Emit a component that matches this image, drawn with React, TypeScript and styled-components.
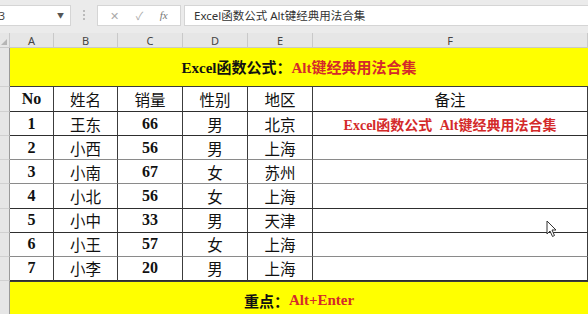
import styled, { createGlobalStyle } from 'styled-components'
import { FC } from 'react'

const serif = `"Liberation Serif", "Noto Sans CJK SC", serif`
const ui = `"Noto Sans", "Noto Sans CJK SC", sans-serif`
const red = '#d42a2a'
const line = '#3c3c3c'

const GlobalStyle = createGlobalStyle`
  html, body {
    margin: 0;
    padding: 0;
    background: #e9e9e9;
    overflow: hidden;
  }
`

const Page = styled.div`
  width: 588px;
  height: 314px;
  overflow: hidden;
  position: relative;
`

const Toolbar = styled.div`
  display: flex;
  align-items: center;
  height: 30px;
  padding-bottom: 3px;
  gap: 3px;
  background: #ebebeb;
`

const Box = styled.div`
  height: 21px;
  background: #fff;
  border: 1px solid #d5d5d5;
  box-sizing: border-box;
  display: flex;
  align-items: center;
  font-family: ${ui};
  font-size: 11px;
  color: #444;
`

const NameBox = styled(Box)`
  width: 84px;
  margin-left: -13px;
  padding: 0 0 0 6px;
  justify-content: space-between;
  border-left: none;
`

const Caret = styled.span`
  font-size: 7px;
  color: #555;
  margin-right: 6px;
`

const Dots = styled.div`
  width: 20px;
  display: flex;
  flex-direction: column;
  align-items: center;
  gap: 2px;

  span {
    width: 2px;
    height: 2px;
    background: #bbb;
  }
`

const Buttons = styled(Box)`
  width: 84px;
  justify-content: space-around;
  padding: 0 4px;
  color: #aaa;
`

const FxText = styled.span`
  font-family: ${serif};
  font-style: italic;
  font-size: 11px;
  color: #777;
`

const Formula = styled(Box)`
  flex: 1;
  padding-left: 9px;
  border-right: none;
  font-size: 11.5px;
  color: #333;
`

const Sheet = styled.div`
  display: grid;
  grid-template-columns: 10px 44px 64px 65px 65px 65px 1fr;
  grid-template-rows: 15px 39px 25px repeat(7, 24.15px) 40px;
`

const ColHead = styled.div`
  background: #e6e6e6;
  border-right: 1px solid #c9c9c9;
  border-bottom: 1px solid #c9c9c9;
  display: flex;
  align-items: center;
  justify-content: center;
  font-family: ${ui};
  font-size: 11px;
  color: #444;
  box-sizing: border-box;
`

const Corner = styled(ColHead)`
  position: relative;
  &::after {
    content: '';
    position: absolute;
    right: 2px;
    bottom: 2px;
    border-left: 6px solid transparent;
    border-bottom: 6px solid #b5b5b5;
  }
`

const RowHead = styled.div`
  background: #e6e6e6;
  border-right: 1px solid #9a9a9a;
  border-bottom: 1px solid #d0d0d0;
  box-sizing: border-box;
  overflow: hidden;
  display: flex;
  align-items: center;
  font-family: ${ui};
  font-size: 10px;
  color: #666;

  span {
    flex: none;
    width: 28px;
    margin-left: -20px;
    text-align: center;
  }
`

const Banner = styled.div<{ $top?: boolean }>`
  grid-column: 2 / 8;
  background: #ffff00;
  display: flex;
  align-items: center;
  justify-content: center;
  font-family: ${serif};
  font-weight: bold;
  font-size: 15px;
  color: #111;
  box-sizing: border-box;
  border-bottom: ${({ $top }) => ($top ? `1px solid ${line}` : 'none')};
  border-top: ${({ $top }) => ($top ? 'none' : `1px solid ${line}`)};
  padding-bottom: ${({ $top }) => ($top ? '2px' : '1px')};
`

const Red = styled.span`
  color: ${red};
`

const Cell = styled.div<{ $dark?: boolean; $bold?: boolean }>`
  background: #fff;
  border-right: 1px solid ${line};
  border-bottom: 1px solid ${({ $dark }) => ($dark ? '#2e2e2e' : '#8a8a8a')};
  box-sizing: border-box;
  display: flex;
  align-items: center;
  justify-content: center;
  font-family: ${serif};
  font-size: ${({ $bold }) => ($bold ? '16px' : '15.5px')};
  font-weight: ${({ $bold }) => ($bold ? 'bold' : 400)};
  color: #111;
  white-space: nowrap;

  &:last-child {
    border-right: none;
  }
`

const Note = styled.span`
  color: ${red};
  font-weight: bold;
  font-size: 14px;
  word-spacing: 4px;
`

const Cursor = styled.svg`
  position: absolute;
  left: 546px;
  top: 220px;
`

const rows = [
  ['1', '王东', '66', '男', '北京'],
  ['2', '小西', '56', '男', '上海'],
  ['3', '小南', '67', '女', '苏州'],
  ['4', '小北', '56', '女', '上海'],
  ['5', '小中', '33', '男', '天津'],
  ['6', '小王', '57', '女', '上海'],
  ['7', '小李', '20', '男', '上海'],
]
const darkLines = [true, false, false, true, true, false, true]

export default function App() {
  return (
    <Page>
      <GlobalStyle />
      <Toolbar>
        <NameBox>
          F3 <Caret>▼</Caret>
        </NameBox>
        <Dots>
          <span />
          <span />
          <span />
        </Dots>
        <Buttons>
          <span>✕</span>
          <span>✓</span>
          <FxText>fx</FxText>
        </Buttons>
        <Formula>Excel函数公式 Alt键经典用法合集</Formula>
      </Toolbar>
      <Sheet>
        <Corner />
        {['A', 'B', 'C', 'D', 'E', 'F'].map((c) => (
          <ColHead key={c}>{c}</ColHead>
        ))}

        <RowHead>
          <span>1</span>
        </RowHead>
        <Banner $top>
          Excel函数公式：<Red>Alt键经典用法合集</Red>
        </Banner>

        <RowHead>
          <span>2</span>
        </RowHead>
        {['No', '姓名', '销量', '性别', '地区', '备注'].map((h, i) => (
          <Cell key={h} $dark $bold={i === 0}>
            {h}
          </Cell>
        ))}

        {rows.map((r, i) => (
          <Row key={r[0]} cells={r} dark={darkLines[i]} index={i} />
        ))}

        <RowHead>
          <span>10</span>
        </RowHead>
        <Banner>
          重点：<Red>Alt+Enter</Red>
        </Banner>
      </Sheet>
      <Cursor width="12" height="18" viewBox="0 0 12 18">
        <path d="M1 1 L1 14 L4 11 L6.5 16.5 L8.5 15.5 L6 10 L10 10 Z" fill="#fff" stroke="#333" strokeWidth="1" />
      </Cursor>
    </Page>
  )
}

const Row: FC<{ cells: string[]; dark: boolean; index: number }> = ({ cells, dark, index }) => (
  <>
    <RowHead>
      <span>{index + 3}</span>
    </RowHead>
    {cells.map((c, j) => (
      <Cell key={j} $dark={dark} $bold={j === 0 || j === 2}>
        {c}
      </Cell>
    ))}
    <Cell $dark={dark}>{index === 0 && <Note>Excel函数公式 Alt键经典用法合集</Note>}</Cell>
  </>
)
